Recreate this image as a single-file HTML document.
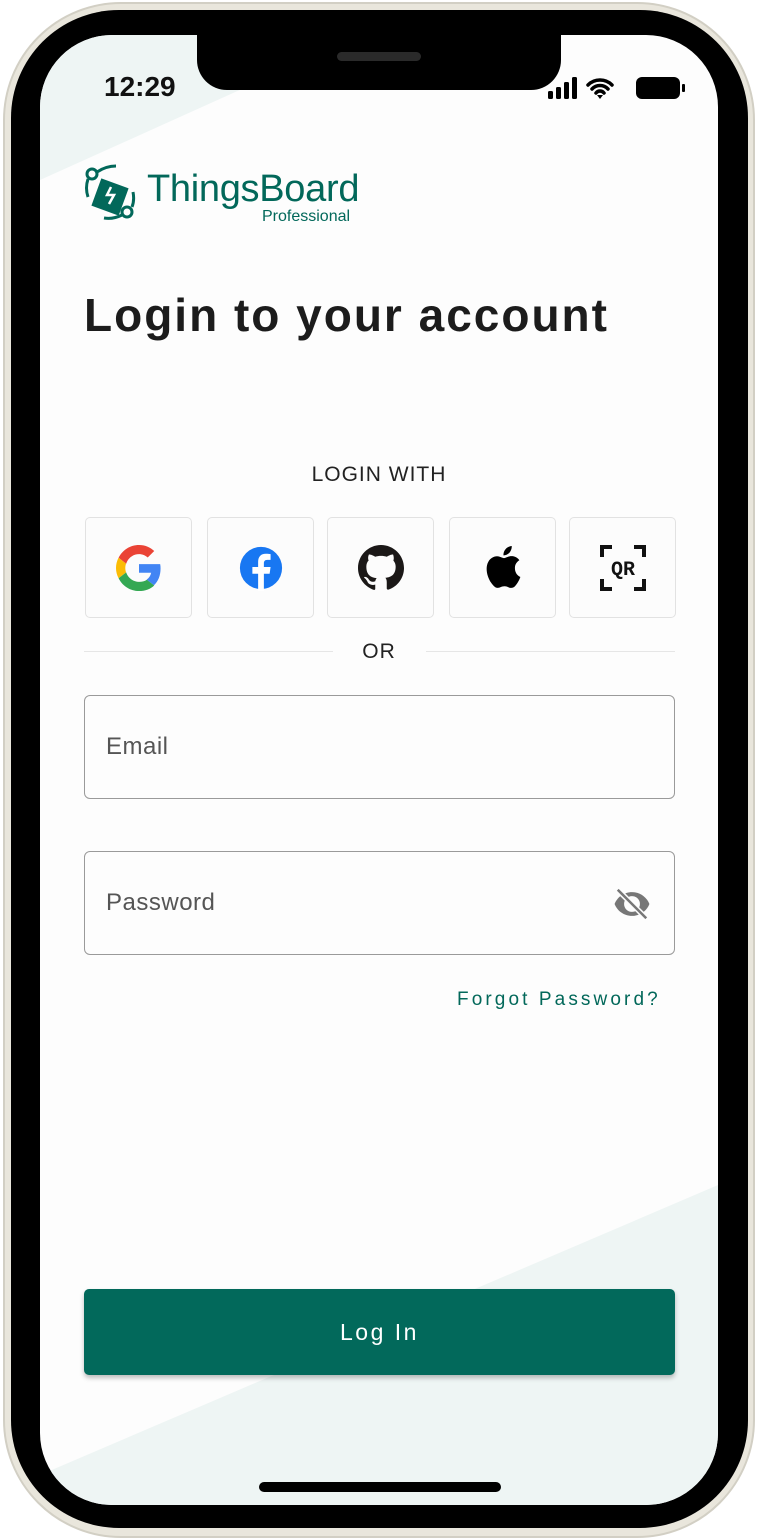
<!DOCTYPE html>
<html><head><meta charset="utf-8"><style>
*{margin:0;padding:0;box-sizing:border-box}
body{width:759px;height:1540px;background:#fff;position:relative;overflow:hidden;font-family:"Liberation Sans",sans-serif}
.outer{position:absolute;left:3px;top:2px;width:752px;height:1536px;border-radius:118px;background:#e9e6dc;border:2px solid #d2cfc4}
.bezel{position:absolute;left:11px;top:10px;width:737px;height:1518px;border-radius:108px;background:#000}
.screen{position:absolute;left:40px;top:35px;width:678px;height:1470px;border-radius:72px;background:#fdfdfd;overflow:hidden}
.notch{position:absolute;left:157px;top:0;width:364px;height:55px;background:#000;border-radius:0 0 30px 30px}
.spk{position:absolute;left:140px;top:17px;width:84px;height:9px;border-radius:5px;background:#2a2a2a}
.abs{position:absolute}
.btn{position:absolute;top:482px;width:107px;height:101px;border:1.5px solid #e2e2e2;border-radius:5px;background:#fcfcfc;display:flex;align-items:center;justify-content:center}
.field{position:absolute;left:44px;width:591px;height:104px;border:1.5px solid #9a9a9a;border-radius:6px;font-size:24px;color:#555;padding:37px 0 0 21px;letter-spacing:.5px}
</style></head><body>
<div class="outer"></div>
<div class="bezel"></div>
<div class="screen">
<svg class="abs" style="left:0;top:0" width="678" height="1470">
<polygon points="0,0 322,0 0,145" fill="#eef5f4"/>
<polygon points="0,1440 678,1150 678,1470 0,1470" fill="#eef5f4"/>
</svg>
<div class="notch"><div class="spk"></div></div>
<div class="abs" style="left:64px;top:36px;font-size:28px;font-weight:bold;color:#111">12:29</div>
<svg class="abs" style="left:508px;top:42px" width="140" height="24">
<rect x="0" y="14" width="5" height="8" rx="1.5"/><rect x="8" y="10" width="5" height="12" rx="1.5"/><rect x="16" y="5" width="5" height="17" rx="1.5"/><rect x="24" y="0" width="5" height="22" rx="1.5"/>
<path d="M40 8a17 17 0 0 1 24 0M44 12a11 11 0 0 1 16 0M48 16a5 5 0 0 1 8 0" stroke="#000" stroke-width="3.5" fill="none" stroke-linecap="round"/><path d="M49 18l3 4 3-4z"/>
<rect x="88" y="0" width="44" height="22" rx="6"/><rect x="134" y="7" width="3" height="8" rx="1"/>
</svg>
<svg class="abs" style="left:42px;top:127px" width="60" height="60" fill="none" stroke="#02685a" stroke-width="3">
<circle cx="10" cy="12" r="5"/><path d="M15 10c6-4 12-6 19-6M6 17c-2 6-2 12 0 18"/>
<circle cx="45" cy="50" r="5"/><path d="M40 53c-6 3-12 4-18 3M50 45c2-5 2-10 1-15"/>
<path d="M15 22l26 0 0 26-26 0z" fill="#02685a" transform="rotate(20 28 35)"/>
<path d="M29 25l-4 8 7 0-5 9" stroke="#fff" stroke-width="2.5"/>
</svg>
<div class="abs" style="left:107px;top:133px;font-size:38px;color:#02685a;letter-spacing:-.3px">ThingsBoard</div>
<div class="abs" style="left:222px;top:173px;font-size:16px;color:#02685a">Professional</div>
<div class="abs" style="left:44px;top:253px;font-size:46px;font-weight:bold;color:#1c1c1c;letter-spacing:2px">Login to your account</div>
<div class="abs" style="left:0;width:678px;top:428px;text-align:center;font-size:21px;color:#222;letter-spacing:1px">LOGIN WITH</div>
<div class="btn" style="left:45px"><svg width="46" height="46" viewBox="0 0 48 48"><path fill="#EA4335" d="M24 9.5c3.5 0 6.6 1.2 9.1 3.6l6.8-6.8C35.8 2.4 30.3 0 24 0 14.6 0 6.6 5.4 2.7 13.3l7.9 6.2C12.5 13.6 17.8 9.5 24 9.5z"/><path fill="#4285F4" d="M46.5 24.5c0-1.6-.1-3.1-.4-4.5H24v9h12.7c-.6 2.9-2.2 5.4-4.7 7.1l7.6 5.9c4.4-4.1 6.9-10.1 6.9-17.5z"/><path fill="#FBBC05" d="M10.5 28.6c-.5-1.4-.8-3-.8-4.6s.3-3.2.8-4.6l-7.9-6.1C1 16.5 0 20.1 0 24s1 7.5 2.7 10.7z"/><path fill="#34A853" d="M24 48c6.5 0 11.9-2.1 15.9-5.8l-7.7-6c-2.2 1.5-5 2.3-8.2 2.3-6.3 0-11.5-4.2-13.4-9.9l-7.9 6.1C6.6 42.6 14.6 48 24 48z"/></svg></div>
<div class="btn" style="left:167px"><svg width="46" height="46" viewBox="0 0 48 48"><circle cx="24" cy="24" r="22" fill="#1877F2"/><path fill="#fff" d="M27 48V30h6l1-7h-7v-4c0-2 1-3.5 3.5-3.5H34V9.5c-1-.2-3-.4-5-.4-5 0-8 3-8 8.4V23h-6v7h6v18z"/></svg></div>
<div class="btn" style="left:287px"><svg width="46" height="46" viewBox="0 0 16 16"><path fill="#1b1817" d="M8 0C3.6 0 0 3.6 0 8c0 3.5 2.3 6.5 5.5 7.6.4.1.5-.2.5-.4v-1.4c-2.2.5-2.7-1-2.7-1-.4-.9-.9-1.2-.9-1.2-.7-.5.1-.5.1-.5.8.1 1.2.8 1.2.8.7 1.2 1.9.9 2.3.7.1-.5.3-.9.5-1.1-1.8-.2-3.6-.9-3.6-4 0-.9.3-1.6.8-2.1-.1-.2-.4-1 .1-2.1 0 0 .7-.2 2.2.8.6-.2 1.3-.3 2-.3s1.4.1 2 .3c1.5-1 2.2-.8 2.2-.8.4 1.1.2 1.9.1 2.1.5.6.8 1.300.8 2.1 0 3.1-1.9 3.7-3.6 3.9.3.3.5.8.5 1.5v2.2c0 .2.1.5.6.4C13.7 14.5 16 11.5 16 8c0-4.4-3.6-8-8-8z"/></svg></div>
<div class="btn" style="left:409px"><svg width="36" height="46" viewBox="105 80 255 330"><path d="M318 245c-1-37 30-55 32-56-17-25-44-29-54-29-23-2-45 14-57 14s-30-13-49-13c-25 0-49 15-62 38-27 46-7 114 19 151 13 18 28 38 47 38 19-1 26-12 49-12s29 12 49 12c20 0 33-18 45-37 14-21 20-41 20-42-1 0-39-15-39-64zM280 134c10-13 17-30 15-47-15 1-33 10-43 22-10 11-18 28-16 45 16 1 33-8 44-20z"/></svg></div>
<div class="btn" style="left:529px"><svg width="46" height="46" viewBox="0 0 46 46"><path d="M2 12V2h10M34 2h10v10M44 34v10H34M12 44H2V34" stroke="#111" stroke-width="4" fill="none"/><text x="23" y="30" text-anchor="middle" font-family="Liberation Mono,monospace" font-size="20" font-weight="bold" fill="#111">QR</text></svg></div>
<div class="abs" style="left:44px;top:616px;width:249px;height:1px;background:#e6e6e6"></div>
<div class="abs" style="left:386px;top:616px;width:249px;height:1px;background:#e6e6e6"></div>
<div class="abs" style="left:0;width:678px;top:605px;text-align:center;font-size:21px;color:#222;letter-spacing:1px">OR</div>
<div class="field" style="top:660px">Email</div>
<div class="field" style="top:816px">Password</div>
<svg class="abs" style="left:570px;top:850px" width="44" height="38" viewBox="0 0 24 24"><path fill="#777" d="M12 4.5C7 4.5 2.7 7.6 1 12c1.7 4.4 6 7.5 11 7.5s9.3-3.1 11-7.5c-1.7-4.4-6-7.5-11-7.5zm0 12.5a5 5 0 1 1 0-10 5 5 0 0 1 0 10z"/><path d="M3 3l18 18" stroke="#fdfdfd" stroke-width="3.5"/><path d="M3 3l18 18" stroke="#777" stroke-width="1.6"/></svg>
<div class="abs" style="left:417px;top:954px;font-size:19px;color:#02685a;letter-spacing:3.1px">Forgot Password?</div>
<div class="abs" style="left:44px;top:1254px;width:591px;height:86px;background:#02695b;border-radius:5px;box-shadow:0 3px 5px rgba(0,0,0,.25);color:#fff;font-size:23px;letter-spacing:2.5px;text-align:center;line-height:86px">Log In</div>
<div class="abs" style="left:219px;top:1447px;width:242px;height:10px;border-radius:5px;background:#000"></div>
</div>
</body></html>
